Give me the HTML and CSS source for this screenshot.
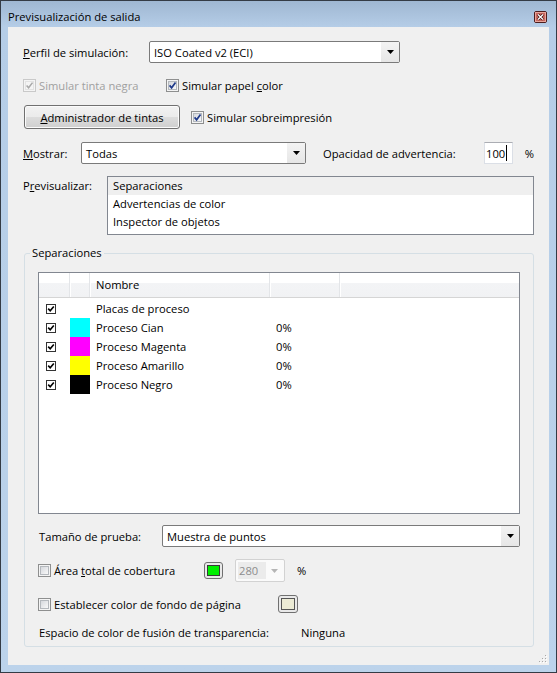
FILE: index.html
```html
<!DOCTYPE html>
<html lang="es">
<head>
  <meta charset="UTF-8">
  <title>Previsualización de salida</title>
  <link rel="stylesheet" href="styles.css">
</head>
<body>
  <svg class="defs" width="0" height="0" aria-hidden="true">
    <defs>
      <linearGradient id="cb-fill" x1="0" y1="0" x2="1" y2="1">
        <stop offset="0" stop-color="#d3d6db"/><stop offset="1" stop-color="#fbfbfb"/>
      </linearGradient>
      <symbol id="cb-off" viewBox="0 0 13 13">
        <rect x=".5" y=".5" width="12" height="12" fill="#f4f4f4" stroke="#8e8f8f"/>
        <rect x="2.5" y="2.5" width="8" height="8" fill="url(#cb-fill)" stroke="#b4b8bd"/>
      </symbol>
      <symbol id="cb-on" viewBox="0 0 13 13">
        <rect x=".5" y=".5" width="12" height="12" fill="#f4f4f4" stroke="#8e8f8f"/>
        <rect x="2.5" y="2.5" width="8" height="8" fill="url(#cb-fill)" stroke="#b4b8bd"/>
        <path d="M3.6 6.4l2 2.4 3.9-5.2" fill="none" stroke="#1f3a8a" stroke-width="1.7"/>
      </symbol>
      <symbol id="cb-dis" viewBox="0 0 13 13">
        <rect x=".5" y=".5" width="12" height="12" fill="#f4f4f4" stroke="#c9c9c9"/>
        <rect x="2.5" y="2.5" width="8" height="8" fill="#f4f4f4" stroke="#e2e2e2"/>
        <path d="M3.6 6.4l2 2.4 3.9-5.2" fill="none" stroke="#a8a8a8" stroke-width="1.5"/>
      </symbol>
      <symbol id="cb-flat" viewBox="0 0 10 10">
        <rect x=".5" y=".5" width="9" height="9" fill="#fff" stroke="#333"/>
        <path d="M2.2 4.6l2 2.2 3.6-4.4" fill="none" stroke="#000" stroke-width="1.6"/>
      </symbol>
      <symbol id="arrow" viewBox="0 0 7 4">
        <path d="M0 0h7L3.5 4z"/>
      </symbol>
    </defs>
  </svg>

  <div class="window">
    <div class="titlebar">
      <span class="title">Previsualización de salida</span>
      <svg class="close" width="13" height="12" viewBox="0 0 13 12">
        <rect x=".5" y=".5" width="12" height="11" rx="1.5" fill="#c8675e" stroke="#4d1d1d"/>
        <rect x="1.5" y="1.5" width="10" height="9" fill="none" stroke="#e7a59c"/>
        <path d="M4 3.5l5 5M9 3.5l-5 5" stroke="#3a1010" stroke-width="2.6"/>
        <path d="M4 3.5l5 5M9 3.5l-5 5" stroke="#fff" stroke-width="1.3"/>
      </svg>
    </div>

    <div class="client">
      <div class="row r-profile">
        <span class="label w-profile"><u>P</u>erfil de simulación:</span>
        <div class="combo w-profile-combo">
          <span class="combo-text">ISO Coated v2 (ECI)</span>
          <span class="combo-btn"><svg width="7" height="4"><use href="#arrow"/></svg></span>
        </div>
      </div>

      <div class="row r-sim">
        <span class="check disabled w-ink"><svg class="cb"><use href="#cb-dis"/></svg><span>Simular tinta negra</span></span>
        <span class="check"><svg class="cb"><use href="#cb-on"/></svg><span>Simular papel <u>c</u>olor</span></span>
      </div>

      <div class="row r-ink">
        <button class="btn"><u>A</u>dministrador de tintas</button>
        <span class="check ink-check"><svg class="cb"><use href="#cb-on"/></svg><span>Simular sobreimpresión</span></span>
      </div>

      <div class="row r-show">
        <span class="label w-show"><u>M</u>ostrar:</span>
        <div class="combo w-show-combo">
          <span class="combo-text">Todas</span>
          <span class="combo-btn"><svg width="7" height="4"><use href="#arrow"/></svg></span>
        </div>
        <span class="label w-opacity">Opacidad de advertencia:</span>
        <span class="textbox">100<i class="caret"></i></span>
        <span class="unit">%</span>
      </div>

      <div class="row r-preview">
        <span class="label w-preview">P<u>r</u>evisualizar:</span>
        <ul class="listbox">
          <li class="selected">Separaciones</li>
          <li>Advertencias de color</li>
          <li>Inspector de objetos</li>
        </ul>
      </div>

      <fieldset class="group">
        <legend>Separaciones</legend>
        <div class="group-body">
          <div class="listview">
            <div class="lv-head">
              <span></span><span></span><span class="lv-title">Nombre</span><span></span><span class="last"></span>
            </div>
            <div class="lv-row">
              <span class="lv-check"><svg width="10" height="10"><use href="#cb-flat"/></svg></span>
              <span></span>
              <span class="lv-name">Placas de proceso</span>
              <span></span><span></span>
            </div>
            <div class="lv-row">
              <span class="lv-check"><svg width="10" height="10"><use href="#cb-flat"/></svg></span>
              <span class="swatch cyan"></span>
              <span class="lv-name">Proceso Cian</span>
              <span class="lv-val">0%</span><span></span>
            </div>
            <div class="lv-row">
              <span class="lv-check"><svg width="10" height="10"><use href="#cb-flat"/></svg></span>
              <span class="swatch magenta"></span>
              <span class="lv-name">Proceso Magenta</span>
              <span class="lv-val">0%</span><span></span>
            </div>
            <div class="lv-row">
              <span class="lv-check"><svg width="10" height="10"><use href="#cb-flat"/></svg></span>
              <span class="swatch yellow"></span>
              <span class="lv-name">Proceso Amarillo</span>
              <span class="lv-val">0%</span><span></span>
            </div>
            <div class="lv-row">
              <span class="lv-check"><svg width="10" height="10"><use href="#cb-flat"/></svg></span>
              <span class="swatch black"></span>
              <span class="lv-name">Proceso Negro</span>
              <span class="lv-val">0%</span><span></span>
            </div>
          </div>

          <div class="row r-size">
            <span class="label w-size">Tamaño de prueba:</span>
            <div class="combo grow">
              <span class="combo-text">Muestra de puntos</span>
              <span class="combo-btn"><svg width="7" height="4"><use href="#arrow"/></svg></span>
            </div>
          </div>

          <div class="row r-area">
            <span class="check w-area"><svg class="cb"><use href="#cb-off"/></svg><span>Área <u>t</u>otal de cobertura</span></span>
            <span class="colorbtn green-btn"><i></i></span>
            <span class="spin">
              <span class="spin-text">280</span>
              <span class="spin-btn"><svg width="7" height="4"><use href="#arrow"/></svg></span>
            </span>
            <span class="unit">%</span>
          </div>

          <div class="row r-page">
            <span class="check w-page"><svg class="cb"><use href="#cb-off"/></svg><span>Establecer color de fondo de página</span></span>
            <span class="colorbtn page-btn"><i></i></span>
          </div>

          <div class="row r-blend">
            <span class="label w-blend">Espacio de color de fusión de transparencia:</span>
            <span>Ninguna</span>
          </div>
        </div>
      </fieldset>

      <svg class="grip" width="8" height="8" viewBox="0 0 8 8">
        <g fill="#fff"><rect x="7" y="7" width="1" height="1"/><rect x="4" y="7" width="1" height="1"/><rect x="1" y="7" width="1" height="1"/><rect x="7" y="4" width="1" height="1"/><rect x="4" y="4" width="1" height="1"/><rect x="7" y="1" width="1" height="1"/></g>
        <g fill="#a8a8a8"><rect x="6" y="6" width="1" height="1"/><rect x="3" y="6" width="1" height="1"/><rect x="0" y="6" width="1" height="1"/><rect x="6" y="3" width="1" height="1"/><rect x="3" y="3" width="1" height="1"/><rect x="6" y="0" width="1" height="1"/></g>
      </svg>
    </div>
  </div>
</body>
</html>
```

FILE: styles.css
```css
/* Window chrome */
* { box-sizing: border-box; margin: 0; padding: 0; }
body {
  font-family: "Open Sans", "Noto Sans", sans-serif;
  font-size: 11.2px;
  line-height: 15px;
  color: #000;
  background: #b9d1ea;
  overflow: hidden;
}
.defs { position: absolute; width: 0; height: 0; }
.window {
  width: 557px;
  height: 673px;
  border: 1px solid #343b45;
  background: linear-gradient(#9fb7d2, #b5cde7 26px, #bcd3eb);
  padding: 0 7px 7px;
  display: flex;
  flex-direction: column;
}
.titlebar {
  height: 26px;
  display: flex;
  align-items: flex-start;
  justify-content: space-between;
}
.title { margin-top: 8px; line-height: 16px; }
.close { margin-top: 10px; margin-right: 2px; }
.client {
  flex: 1;
  background: #f0f0f0;
  padding: 14px 15px 0;
  display: flex;
  flex-direction: column;
}

/* Rows */
.row { display: flex; align-items: center; }
.r-profile { height: 22px; }
.r-sim { height: 16px; margin-top: 14px; }
.r-ink { height: 24px; margin-top: 12px; }
.r-show { height: 22px; margin-top: 13px; }
.r-preview { align-items: flex-start; margin-top: 12px; }
.r-size { height: 22px; margin-top: 11px; }
.r-area { height: 23px; margin-top: 12px; }
.r-page { height: 18px; margin-top: 13px; }
.r-blend { height: 16px; margin-top: 11px; }

.label { flex: none; }
.w-profile { width: 126px; }
.w-show { width: 58px; }
.w-opacity { width: 161px; margin-left: 17px; }
.w-preview { width: 84px; padding-top: 2px; }
.w-size { width: 124px; padding-left: 1px; }
.w-blend { width: 263px; padding-left: 1px; }
.w-ink { width: 143px; }
.w-area { width: 166px; }
.w-page { width: 240px; }
.unit { margin-left: 12px; }

/* Checkboxes */
.check { display: flex; align-items: center; flex: none; }
.check .cb { width: 13px; height: 13px; margin-right: 3px; flex: none; }
.check.disabled { color: #a0a0a0; }
.ink-check { margin-left: 11px; }

/* Combo boxes */
.combo {
  height: 22px;
  border: 1px solid #7a7a7a;
  border-radius: 2px;
  background: #fff;
  display: flex;
  align-items: center;
  flex: none;
}
.combo.grow { flex: 1; }
.w-profile-combo { width: 251px; }
.w-show-combo { width: 225px; }
.combo-text { flex: 1; padding-left: 4px; }
.combo-btn {
  width: 18px;
  height: 100%;
  background: linear-gradient(#f3f3f3, #e6e6e6);
  display: flex;
  align-items: center;
  justify-content: center;
}
.combo-btn svg { fill: #000; }

/* Push button */
.btn {
  width: 156px;
  height: 24px;
  margin-left: 1px;
  font: inherit;
  color: #000;
  border: 1px solid #707070;
  border-radius: 3px;
  background: linear-gradient(#f2f2f2 0%, #ebebeb 50%, #dddddd 50%, #cfcfcf 100%);
  box-shadow: inset 0 0 0 1px #fbfbfb;
}

/* Text box */
.textbox {
  width: 30px;
  height: 22px;
  border: 1px solid #dbdfe6;
  border-top-color: #abadb3;
  background: #fff;
  padding-left: 1px;
  display: flex;
  align-items: center;
}
.caret { display: block; width: 1px; height: 16px; background: #000; margin-left: 1px; }

/* List box */
.listbox {
  list-style: none;
  width: 428px;
  height: 59px;
  border: 1px solid #828790;
  background: #fff;
}
.listbox li { height: 18px; line-height: 18px; padding-left: 5px; }
.listbox li.selected { background: #efefef; }

/* Group box */
.group {
  margin: 10px 0 0 1px;
  width: 510px;
  border: 1px solid #d5dfe5;
  border-radius: 3px;
  padding: 0;
}
.group legend { margin-left: 5px; padding: 0 2px; line-height: 16px; }
.group-body { padding: 11px 13px 6px; display: flex; flex-direction: column; }

/* List view */
.listview {
  height: 242px;
  border: 1px solid #828790;
  background: #fff;
}
.lv-head, .lv-row {
  display: grid;
  grid-template-columns: 31px 20px 180px 70px 1fr;
}
.lv-head {
  height: 25px;
  background: linear-gradient(#fff 0, #fff 40%, #f3f4f6 40%, #f1f2f4 100%);
  border-bottom: 1px solid #d5d5d5;
}
.lv-head span { border-right: 1px solid #e3e5e8; box-shadow: 1px 0 0 #fff; }
.lv-head span.last { border-right: none; box-shadow: none; }
.lv-title { padding-left: 6px; line-height: 24px; }
.lv-row { height: 19px; align-items: center; }
.lv-head + .lv-row { margin-top: 1px; }
.lv-check { padding-left: 7px; display: flex; align-items: center; }
.lv-name, .lv-val { padding-left: 6px; }
.swatch { height: 19px; }
.cyan { background: #00ffff; }
.magenta { background: #ff00ff; }
.yellow { background: #ffff00; }
.black { background: #000; }

/* Colour buttons and spin box */
.colorbtn {
  flex: none;
  display: flex;
  align-items: center;
  justify-content: center;
  border: 1px solid #707070;
  border-radius: 3px;
  background: #e9e9e9;
}
.colorbtn i { display: block; border: 1px solid #3a3a3a; }
.green-btn { width: 19px; height: 17px; }
.green-btn i { width: 13px; height: 11px; background: #00f000; }
.page-btn { width: 20px; height: 18px; }
.page-btn i { width: 14px; height: 12px; background: #ecebd5; border-color: #555; }
.spin {
  width: 50px;
  height: 23px;
  margin-left: 12px;
  border: 1px solid #d2d2d2;
  border-radius: 2px;
  background: #fafafa;
  display: flex;
  align-items: center;
  padding: 2px;
  color: #8d8d8d;
}
.spin-text { flex: 1; height: 100%; background: #ebebeb; padding-left: 1px; line-height: 17px; }
.spin-btn { width: 16px; display: flex; justify-content: center; }
.spin-btn svg { fill: #b5b5b5; }

.grip { align-self: flex-end; margin: auto -13px 2px 0; }
```
